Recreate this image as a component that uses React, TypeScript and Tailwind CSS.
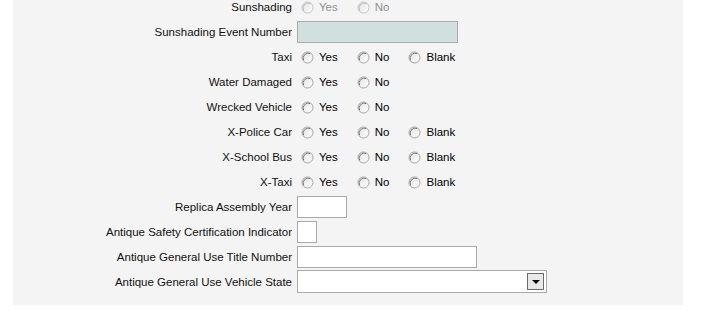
import React from "react";

type Row =
  | { label: string; kind: "radio"; options: string[]; disabled?: boolean }
  | { label: string; kind: "text"; width: string; disabled?: boolean }
  | { label: string; kind: "select" };

const rows: Row[] = [
  { label: "Sunshading", kind: "radio", options: ["Yes", "No"], disabled: true },
  { label: "Sunshading Event Number", kind: "text", width: "w-[161px]", disabled: true },
  { label: "Taxi", kind: "radio", options: ["Yes", "No", "Blank"] },
  { label: "Water Damaged", kind: "radio", options: ["Yes", "No"] },
  { label: "Wrecked Vehicle", kind: "radio", options: ["Yes", "No"] },
  { label: "X-Police Car", kind: "radio", options: ["Yes", "No", "Blank"] },
  { label: "X-School Bus", kind: "radio", options: ["Yes", "No", "Blank"] },
  { label: "X-Taxi", kind: "radio", options: ["Yes", "No", "Blank"] },
  { label: "Replica Assembly Year", kind: "text", width: "w-[50px]" },
  { label: "Antique Safety Certification Indicator", kind: "text", width: "w-[20px]" },
  { label: "Antique General Use Title Number", kind: "text", width: "w-[180px]" },
  { label: "Antique General Use Vehicle State", kind: "select" },
];

const RadioCircle: React.FC<{ disabled?: boolean }> = ({ disabled }) => (
  <svg width="13" height="13" viewBox="0 0 13 13" aria-hidden="true" className="block">
    <defs>
      <linearGradient id="rfill" x1="0" y1="0" x2="1" y2="1">
        <stop offset="0" stopColor="#e2e2e2" />
        <stop offset="1" stopColor="#ffffff" />
      </linearGradient>
    </defs>
    <circle cx="6.5" cy="6.5" r="5.5" fill="url(#rfill)" stroke={disabled ? "#c4c4c4" : "#a4a4a4"} strokeWidth="1" />
    <path d="M2.6 9.2 A5 5 0 0 1 9.2 2.6" fill="none" stroke={disabled ? "#b8b8b8" : "#707070"} strokeWidth="0.9" />
  </svg>
);

const RadioGroup: React.FC<{ options: string[]; disabled?: boolean }> = ({ options, disabled }) => (
  <div className="flex items-center pl-[4px] pt-[2px]">
    {options.map((o) => (
      <label key={o} className="flex items-center mr-[19px]">
        <RadioCircle disabled={disabled} />
        <span className={`ml-[5px] ${disabled ? "text-[#8f8f8f]" : "text-black"}`}>{o}</span>
      </label>
    ))}
  </div>
);

const StateSelect: React.FC = () => (
  <div className="flex items-center justify-end w-[250px] h-[23px] bg-white border border-[#aaaaaa] pr-[2px]">
    <div className="flex items-center justify-center w-[17px] h-[17px] border border-[#6a6a6a] bg-[#e8e8e8]">
      <div className="w-0 h-0 border-l-[4px] border-r-[4px] border-t-[4px] border-l-transparent border-r-transparent border-t-black" />
    </div>
  </div>
);

export default function App() {
  return (
    <div className="bg-white w-[705px] h-[316px] overflow-hidden" style={{ fontFamily: '"Liberation Sans", Arial, sans-serif' }}>
      <div className="ml-[13px] w-[670px] h-[305px] bg-[#f4f4f4] overflow-hidden text-[11.5px] text-black">
        <div className="-mt-[6px] flex flex-col">
          {rows.map((r) => (
            <div key={r.label} className="flex items-center h-[25px]">
              <div className="w-[279px] pt-[2px] text-right whitespace-nowrap text-[#111111]">{r.label}</div>
              <div className="ml-[5px] flex items-center">
                {r.kind === "radio" && <RadioGroup options={r.options} disabled={r.disabled} />}
                {r.kind === "text" && (
                  <input
                    type="text"
                    disabled={r.disabled}
                    className={`${r.width} h-[22px] border border-[#aaaaaa] outline-none ${r.disabled ? "bg-[#d1dfdf]" : "bg-white"}`}
                  />
                )}
                {r.kind === "select" && <StateSelect />}
              </div>
            </div>
          ))}
        </div>
      </div>
    </div>
  );
}
